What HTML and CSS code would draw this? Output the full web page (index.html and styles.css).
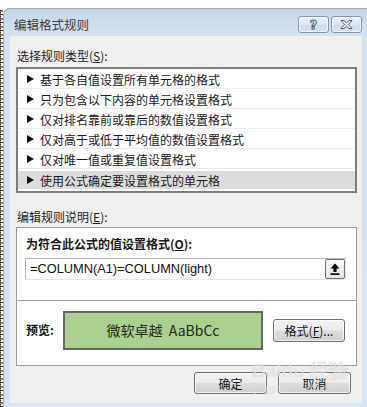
FILE: index.html
```html
<!DOCTYPE html>
<html>
<head>
<meta charset="utf-8">
<link rel="stylesheet" href="styles.css">
</head>
<body>
<div class="screen">
  <div class="cells"></div>
  <div class="window">
    <div class="titlebar">
      <span class="title">编辑格式规则</span>
      <div class="caption-btns">
        <div class="cap-btn help">?</div>
        <div class="cap-btn close">
          <svg width="13" height="9" viewBox="0 0 13 9"><path d="M1 0.5 H4 L6.5 2.8 L9 0.5 H12 L8.3 4.5 L12 8.5 H9 L6.5 6.2 L4 8.5 H1 L4.7 4.5 Z" fill="#fff" stroke="#4b5b70" stroke-width="1" stroke-linejoin="round"/></svg>
        </div>
      </div>
    </div>
    <div class="client">
      <div class="label first">选择规则类型(<u>S</u>):</div>
      <ul class="rules">
        <li><i class="tri"></i>基于各自值设置所有单元格的格式</li>
        <li><i class="tri"></i>只为包含以下内容的单元格设置格式</li>
        <li><i class="tri"></i>仅对排名靠前或靠后的数值设置格式</li>
        <li><i class="tri"></i>仅对高于或低于平均值的数值设置格式</li>
        <li><i class="tri"></i>仅对唯一值或重复值设置格式</li>
        <li class="selected"><i class="tri"></i>使用公式确定要设置格式的单元格</li>
      </ul>
      <div class="label second">编辑规则说明(<u>E</u>):</div>
      <div class="desc">
        <div class="desc-top">
          <div class="bold-label">为符合此公式的值设置格式(<u>O</u>):</div>
          <div class="formula">
            <span class="formula-text">=COLUMN(A1)=COLUMN(light)</span>
            <div class="ref-btn">
              <svg width="10" height="12" viewBox="0 0 10 12"><path d="M5 0.5 L9.5 5.5 H6.6 V9 H3.4 V5.5 H0.5 Z" fill="#000"/><rect x="0.5" y="10.3" width="9" height="1.6" fill="#000"/></svg>
            </div>
          </div>
        </div>
        <div class="desc-bottom">
          <span class="bold-label preview-label">预览:</span>
          <div class="preview">微软卓越  AaBbCc</div>
          <div class="btn fmt">格式(<u>F</u>)...</div>
        </div>
      </div>
      <div class="actions">
        <div class="btn act">确定</div>
        <div class="btn act">取消</div>
      </div>
    </div>
  </div>
  <div class="watermark">
    <span class="wm-top">Bai<span class="paw">du</span> 经验</span>
    <span class="wm-url">jingyan.baidu.com</span>
  </div>
</div>
</body>
</html>
```
FILE: styles.css
```css
* { box-sizing: border-box; }
html, body { margin: 0; padding: 0; background: #fff; }
body {
  font-family: "Noto Sans CJK SC", "Microsoft YaHei", sans-serif;
  font-size: 12px;
  color: #1e1e1e;
}
u { text-decoration: underline; text-underline-offset: 1px; }

.screen {
  position: relative;
  width: 367px;
  height: 407px;
  display: flex;
  overflow: hidden;
}

.cells {
  width: 3px;
  margin-top: 10px;
  background:
    repeating-linear-gradient(to bottom, #c9791f 0 2px, #ffffff 2px 4px, #3a3a3a 4px 5px, #ffffff 5px 8px) 1px 0 / 2px 100% no-repeat,
    repeating-linear-gradient(to bottom, #2a2a2a 0 1px, #9a9a9a 1px 2px) 0 0 / 1px 100% no-repeat;
}

.window {
  flex: 1;
  margin-top: 8px;
  height: 399px;
  background: linear-gradient(to bottom, #c6d5e7 0, #d6e2f0 28px, #d8e4f2 100%);
  border-top: 1px solid #9aaec6;
  border-left: 1px solid #9aaec6;
  border-radius: 7px 0 0 0;
  padding: 0 5px 4px 6px;
  display: flex;
  flex-direction: column;
}

.titlebar {
  height: 27px;
  display: flex;
  justify-content: space-between;
  align-items: flex-start;
}
.title {
  margin-top: 6px;
  padding-left: 4px;
  line-height: 20px;
  font-size: 12.5px;
  color: #3d3d3d;
}
.caption-btns {
  display: flex;
  gap: 2px;
  margin-top: 7px;
}
.cap-btn {
  width: 31px;
  height: 17px;
  border: 1px solid #8597ad;
  border-radius: 3px;
  background: linear-gradient(to bottom, #e9f0f8 0, #dbe5f1 50%, #cfdbea 51%, #d6e1ee 100%);
  box-shadow: inset 0 0 0 1px rgba(255,255,255,0.6);
  display: flex;
  align-items: center;
  justify-content: center;
}
.help {
  font-family: "DejaVu Sans", sans-serif;
  font-weight: bold;
  font-size: 13px;
  line-height: 15px;
  color: #fff;
  -webkit-text-stroke: 0.9px #4b5b70;
}

.client {
  flex: 1;
  background: #f0f0f0;
  padding: 0 5px 0 6px;
  display: flex;
  flex-direction: column;
}

.label {
  height: 20px;
  line-height: 20px;
  padding-left: 1px;
  color: #1e1e1e;
}
.label.first { margin-top: 10px; }
.label.second { margin-top: 14px; }

.rules {
  list-style: none;
  margin: 1px 0 0 0;
  padding: 0;
  height: 126px;
  border: 2px solid #7d7d7d;
  background: #fff;
}
.rules li {
  height: 20px;
  line-height: 20px;
  padding-top: 3px;
  padding-left: 9px;
  display: flex;
  align-items: center;
  border-bottom: 1px solid #ededed;
  color: #1a1a1a;
}
.rules li.selected {
  background: linear-gradient(to bottom, #fff 0 2px, #dcdcdc 2px);
  border-bottom: none;
}
.tri {
  width: 0;
  height: 0;
  border-left: 7px solid #111;
  border-top: 4px solid transparent;
  border-bottom: 4px solid transparent;
  margin-right: 6px;
  margin-top: -2px;
}

.desc {
  height: 139px;
  border: 1px solid #9c9c9c;
  background: #fff;
  display: flex;
  flex-direction: column;
}
.desc-top {
  height: 73px;
  border-bottom: 1px solid #a0a0a0;
  padding: 6px 0 0 9px;
}
.bold-label {
  font-weight: bold;
  line-height: 20px;
  color: #1a1a1a;
}
.formula {
  margin: 4px 0 0 -1px;
  width: 321px;
  height: 22px;
  border: 1px solid #b8bcc2;
  border-right-color: #dfe3e8;
  border-bottom-color: #e3e7ec;
  display: flex;
  align-items: center;
  justify-content: space-between;
  padding: 0 0 0 4px;
}
.formula-text {
  font-family: "Liberation Sans", Arial, sans-serif;
  font-size: 12.8px;
  color: #111;
  line-height: 20px;
}
.ref-btn {
  width: 20px;
  height: 20px;
  border: 1px solid #707070;
  border-radius: 2px;
  background: linear-gradient(to bottom, #fbfbfb, #e4e4e4);
  display: flex;
  align-items: center;
  justify-content: center;
}

.desc-bottom {
  flex: 1;
  display: flex;
  align-items: center;
  padding: 0 0 6px 9px;
  margin-top: 0;
}
.preview-label {
  width: 37px;
}
.preview {
  width: 200px;
  height: 39px;
  border: 2px solid #686868;
  background: #a9d08e;
  display: flex;
  align-items: center;
  justify-content: center;
  white-space: pre;
  font-size: 14px;
  color: #262626;
}

.btn {
  border: 1px solid #707070;
  border-radius: 3px;
  background: linear-gradient(to bottom, #f4f4f4 0, #ebebeb 48%, #dddddd 52%, #cfcfcf 100%);
  box-shadow: inset 0 0 0 1px rgba(255,255,255,0.7);
  display: flex;
  align-items: center;
  justify-content: center;
  color: #111;
}
.fmt {
  margin-left: 10px;
  width: 72px;
  height: 23px;
}

.actions {
  display: flex;
  justify-content: flex-end;
  gap: 11px;
  margin-top: 6px;
  padding-right: 6px;
}
.act {
  width: 73px;
  height: 22px;
}

.watermark {
  position: absolute;
  left: 252px;
  top: 360px;
  display: flex;
  flex-direction: column;
  pointer-events: none;
  color: rgba(255,255,255,0.55);
  text-shadow: 0 0 1px rgba(120,120,120,0.35);
}
.wm-top {
  font-family: "Liberation Sans", sans-serif;
  font-size: 19px;
  font-weight: bold;
  line-height: 22px;
}
.wm-url {
  font-family: "Liberation Sans", sans-serif;
  font-size: 11px;
  line-height: 12px;
  margin-left: 2px;
}
```
